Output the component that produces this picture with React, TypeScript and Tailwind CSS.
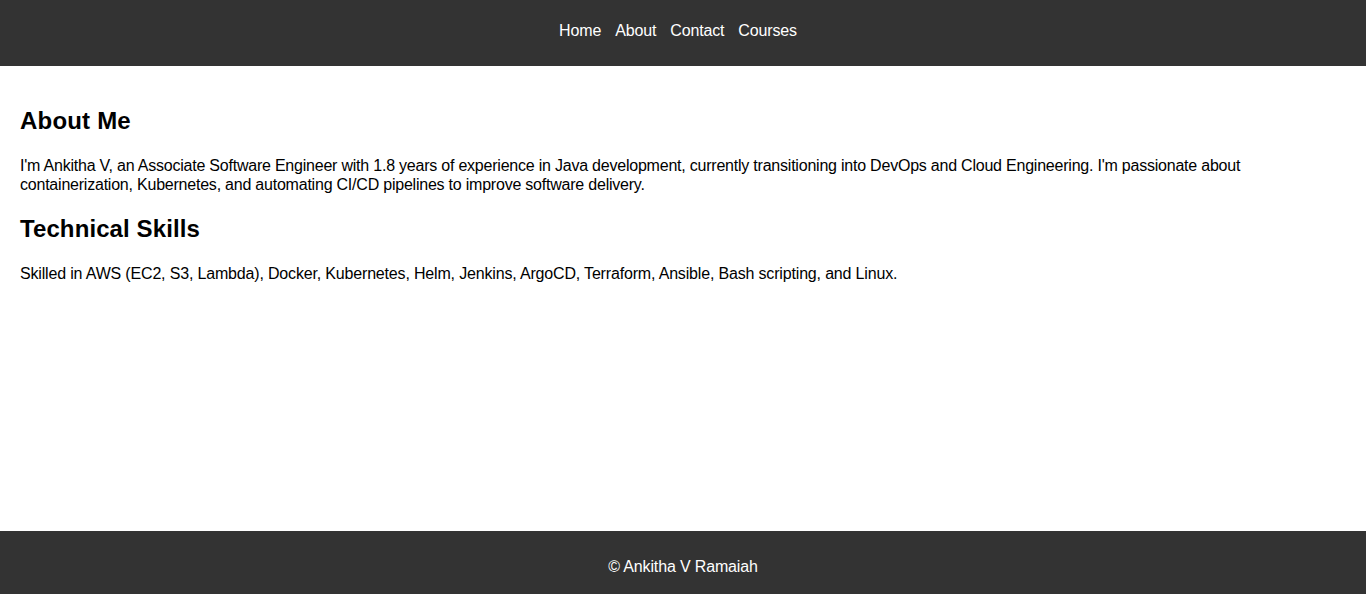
const links = ["Home", "About", "Contact", "Courses"]

export default function App() {
  return (
    <div className="flex min-h-screen flex-col bg-white text-black font-['Liberation_Sans',Arial,sans-serif]">
      {/* top nav */}
      <header className="h-[66px] bg-[#333] pt-[22px] text-white">
        <nav className="flex justify-center gap-[14px] pr-[10px] text-base leading-[normal] tracking-[-0.15px]">
          {links.map((l) => (
            <a key={l} href="#" className="text-white">
              {l}
            </a>
          ))}
        </nav>
      </header>

      {/* content */}
      <main className="flex-1 p-5">
        <h2 className="mt-[21px] mb-[21px] text-2xl leading-[normal] font-bold tracking-[0.2px]">About Me</h2>
        <p className="my-[21px] text-base leading-[19px] tracking-[-0.22px]">
          I'm Ankitha V, an Associate Software Engineer with 1.8 years of experience in Java development, currently
          transitioning into DevOps and Cloud Engineering. I'm passionate about containerization, Kubernetes, and
          automating CI/CD pipelines to improve software delivery.
        </p>
        <h2 className="my-[21px] text-2xl leading-[normal] font-bold tracking-[0.1px]">Technical Skills</h2>
        <p className="my-[21px] text-base leading-[19px] tracking-[-0.17px]">
          Skilled in AWS (EC2, S3, Lambda), Docker, Kubernetes, Helm, Jenkins, ArgoCD, Terraform, Ansible, Bash
          scripting, and Linux.
        </p>
      </main>

      <footer className="h-[63px] bg-[#333] pt-[27px] text-center text-base leading-[normal] tracking-[-0.15px] text-white">
        © Ankitha V Ramaiah
      </footer>
    </div>
  )
}
